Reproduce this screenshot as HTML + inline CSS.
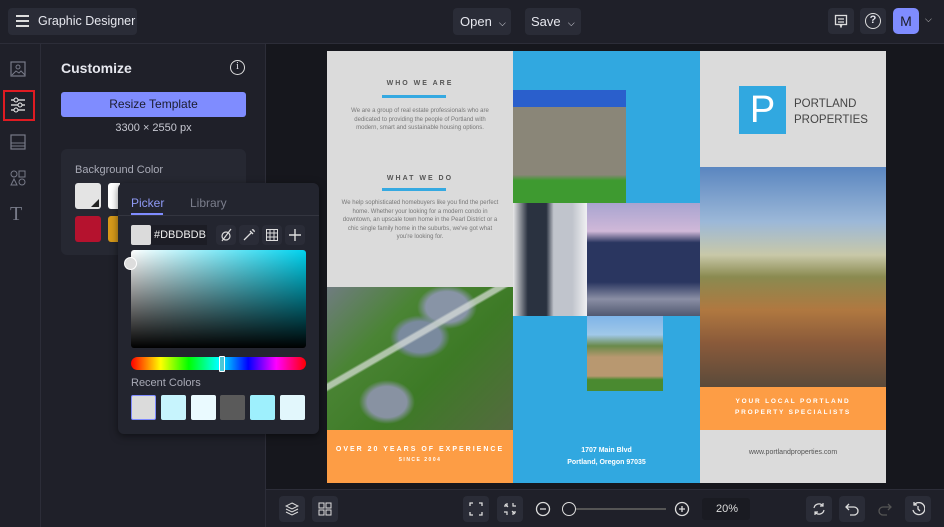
<!DOCTYPE html><html><head><style>
*{margin:0;padding:0;box-sizing:border-box}
body{width:944px;height:527px;overflow:hidden;background:#16171d;font-family:"Liberation Sans",sans-serif;color:#e6e7ee;position:relative}
.a{position:absolute}
.btn{background:#2a2c37;border-radius:4px}
.ct{text-align:center}
svg{display:block}
</style></head><body>
<!-- top bar -->
<div class="a" style="left:0;top:0;width:944px;height:44px;background:#1f2029;border-bottom:1px solid #2c2d38"></div>
<div class="a btn" style="left:8px;top:8px;width:129px;height:27px"></div>
<div class="a" style="left:16px;top:15px;width:13px;height:2px;background:#ddd;box-shadow:0 5px 0 #ddd,0 10px 0 #ddd"></div>
<div class="a" style="left:38px;top:14px;font-size:12.5px">Graphic Designer</div>
<div class="a btn" style="left:453px;top:8px;width:58px;height:27px"></div>
<div class="a" style="left:460px;top:14px;font-size:13px">Open &nbsp;<span style="font-size:9px">⌵</span></div>
<div class="a btn" style="left:525px;top:8px;width:56px;height:27px"></div>
<div class="a" style="left:531px;top:14px;font-size:13px">Save &nbsp;<span style="font-size:9px">⌵</span></div>
<div class="a btn" style="left:828px;top:8px;width:26px;height:26px"></div>
<svg class="a" style="left:834px;top:14px" width="14" height="14"><rect x="1.5" y="1.5" width="11" height="9" fill="none" stroke="#ddd" stroke-width="1.3"/><path d="M4 5h6M4 8h6M6 10.5l1 2.5l1-2.5" stroke="#ddd" stroke-width="1.2" fill="none"/></svg>
<div class="a btn" style="left:860px;top:8px;width:26px;height:26px"></div>
<div class="a ct" style="left:865px;top:13px;width:16px;height:16px;border:1.5px solid #ddd;border-radius:50%;font-size:11px;line-height:13px;font-weight:bold">?</div>
<div class="a ct" style="left:893px;top:8px;width:26px;height:26px;background:#7f8cff;border-radius:5px;color:#1b1c25;font-size:14px;line-height:26px">M</div>
<div class="a" style="left:925px;top:14px;font-size:9px;color:#ccc">⌵</div>
<!-- rail -->
<div class="a" style="left:0;top:44px;width:41px;height:483px;background:#1f2029;border-right:1px solid #2c2d38"></div>
<svg class="a" style="left:10px;top:61px" width="16" height="16"><rect x="1" y="1" width="14" height="14" fill="none" stroke="#777a88" stroke-width="1.2"/><circle cx="8" cy="6" r="2" fill="none" stroke="#777a88"/><path d="M2 14l4-4 3 2 2-2 4 4" stroke="#777a88" fill="none"/></svg>
<div class="a" style="left:3px;top:90px;width:32px;height:31px;border:2px solid #e01b22"></div>
<svg class="a" style="left:10px;top:97px" width="16" height="16"><path d="M1 3h14M1 8h14M1 13h14" stroke="#eee" stroke-width="1.3"/><circle cx="6" cy="3" r="2" fill="#1f2029" stroke="#eee"/><circle cx="10" cy="8" r="2" fill="#1f2029" stroke="#eee"/><circle cx="6" cy="13" r="2" fill="#1f2029" stroke="#eee"/></svg>
<svg class="a" style="left:10px;top:134px" width="16" height="16"><rect x="1" y="1" width="14" height="14" fill="none" stroke="#777a88" stroke-width="1.2"/><path d="M1 9h14M1 12h14" stroke="#777a88"/></svg>
<svg class="a" style="left:10px;top:170px" width="16" height="16"><circle cx="4" cy="4" r="3" fill="none" stroke="#777a88"/><rect x="9" y="1" width="6" height="6" fill="none" stroke="#777a88"/><path d="M4 9l3 6H1z" fill="none" stroke="#777a88"/><circle cx="12" cy="12" r="3" fill="none" stroke="#777a88"/></svg>
<div class="a" style="left:10px;top:203px;font-family:'Liberation Serif',serif;font-size:20px;color:#777a88">T</div>
<!-- panel -->
<div class="a" style="left:41px;top:44px;width:225px;height:483px;background:#1f2029;border-right:1px solid #2c2d38"></div>
<div class="a" style="left:61px;top:60px;font-size:14px;font-weight:bold">Customize</div>
<div class="a ct" style="left:230px;top:60px;width:15px;height:15px;border:1.3px solid #ddd;border-radius:50%;font-size:10px;line-height:12px;font-family:'Liberation Serif',serif">i</div>
<div class="a ct" style="left:61px;top:92px;width:185px;height:25px;background:#7f8cff;border-radius:3px;color:#1b1c30;font-size:12px;line-height:25px">Resize Template</div>
<div class="a ct" style="left:61px;top:122px;width:185px;font-size:11px;color:#c8c9d2">3300 × 2550 px</div>
<div class="a" style="left:61px;top:149px;width:185px;height:106px;background:#262832;border-radius:6px"></div>
<div class="a" style="left:75px;top:164px;font-size:11px;color:#a8aab6">Background Color</div>
<div class="a" style="left:75px;top:183px;width:26px;height:26px;background:#e4e4e4;border-radius:3px;overflow:hidden"><div class="a" style="right:2px;bottom:2px;width:0;height:0;border-left:8px solid transparent;border-bottom:8px solid #222"></div></div>
<div class="a" style="left:108px;top:183px;width:12px;height:26px;background:#fff;border-radius:3px 0 0 3px"></div>
<div class="a" style="left:75px;top:216px;width:26px;height:26px;background:#b5122e;border-radius:3px"></div>
<div class="a" style="left:108px;top:216px;width:12px;height:26px;background:#d79a1a;border-radius:3px 0 0 3px"></div>
<!-- picker -->
<div class="a" style="left:118px;top:183px;width:201px;height:251px;background:#23252f;border-radius:6px;box-shadow:0 2px 8px rgba(0,0,0,.5)"></div>
<div class="a" style="left:131px;top:196px;font-size:12px;color:#8f9af5">Picker</div>
<div class="a" style="left:131px;top:213px;width:32px;height:2px;background:#7f8cff"></div>
<div class="a" style="left:190px;top:196px;font-size:12px;color:#7b7e8c">Library</div>
<div class="a" style="left:118px;top:215px;width:201px;height:1px;background:#33353f"></div>
<div class="a" style="left:131px;top:225px;width:20px;height:20px;background:#dbdbdb;border-radius:2px"></div>
<div class="a" style="left:151px;top:225px;width:56px;height:20px;background:#1c1d25"></div>
<div class="a" style="left:154px;top:229px;font-size:11px;color:#eee">#DBDBDB</div>
<div class="a btn" style="left:216px;top:225px;width:20px;height:20px"></div>
<svg class="a" style="left:219px;top:228px" width="14" height="14"><circle cx="7" cy="8" r="4" fill="none" stroke="#ddd" stroke-width="1.2"/><path d="M3 13L12 1" stroke="#ddd" stroke-width="1.2"/></svg>
<div class="a btn" style="left:239px;top:225px;width:20px;height:20px"></div>
<svg class="a" style="left:242px;top:228px" width="14" height="14"><path d="M2 12l7-7M8 3l3 3M10 2a1.5 1.5 0 0 1 2 2" stroke="#ddd" stroke-width="1.3" fill="none"/></svg>
<div class="a btn" style="left:262px;top:225px;width:20px;height:20px"></div>
<svg class="a" style="left:265px;top:228px" width="14" height="14"><rect x="1.5" y="1.5" width="11" height="11" fill="none" stroke="#ddd"/><path d="M5 1.5v11M9 1.5v11M1.5 5h11M1.5 9h11" stroke="#ddd"/></svg>
<div class="a btn" style="left:285px;top:225px;width:20px;height:20px"></div>
<svg class="a" style="left:288px;top:228px" width="14" height="14"><path d="M7 1v12M1 7h12" stroke="#ddd" stroke-width="1.4"/></svg>
<div class="a" style="left:131px;top:250px;width:175px;height:98px;border-radius:3px;background:linear-gradient(to bottom,rgba(0,0,0,0),#000),linear-gradient(to right,#fff,#00d2ee)"></div>
<div class="a" style="left:124px;top:257px;width:13px;height:13px;border-radius:50%;background:#ddd;border:1px solid #fff"></div>
<div class="a" style="left:131px;top:357px;width:175px;height:13px;border-radius:7px;background:linear-gradient(to right,#f00,#ff0 17%,#0f0 33%,#0ff 50%,#00f 67%,#f0f 83%,#f00)"></div>
<div class="a" style="left:219px;top:356px;width:6px;height:16px;border:1px solid #fff;background:#4bc8d8;border-radius:1px"></div>
<div class="a" style="left:131px;top:377px;font-size:11px;color:#a8aab6">Recent Colors</div>
<div class="a" style="left:131px;top:395px;width:25px;height:25px;background:#dbdbdb;border:1px solid #7f8cff;border-radius:2px"></div>
<div class="a" style="left:161px;top:395px;width:25px;height:25px;background:#c7f4fd;border-radius:2px"></div>
<div class="a" style="left:191px;top:395px;width:25px;height:25px;background:#eafaff;border-radius:2px"></div>
<div class="a" style="left:220px;top:395px;width:25px;height:25px;background:#5a5a5a;border-radius:2px"></div>
<div class="a" style="left:250px;top:395px;width:25px;height:25px;background:#9ef0fd;border-radius:2px"></div>
<div class="a" style="left:280px;top:395px;width:25px;height:25px;background:#e2f7fc;border-radius:2px"></div>
<!-- canvas -->
<div class="a" style="left:327px;top:51px;width:559px;height:432px;background:#dbdbdb;overflow:hidden">
 <div class="a" style="left:0;top:0;width:186px;height:236px;background:#dbdbdb"></div>
 <div class="a ct" style="left:0;top:29px;width:186px;font-size:7px;letter-spacing:2px;color:#555;font-weight:bold">WHO WE ARE</div>
 <div class="a" style="left:55px;top:44px;width:64px;height:3px;background:#35a9e1"></div>
 <div class="a ct" style="left:20px;top:56px;width:146px;font-size:6px;line-height:8.5px;color:#777">We are a group of real estate professionals who are dedicated to providing the people of Portland with modern, smart and sustainable housing options.</div>
 <div class="a ct" style="left:0;top:124px;width:186px;font-size:7px;letter-spacing:2px;color:#555;font-weight:bold">WHAT WE DO</div>
 <div class="a" style="left:55px;top:137px;width:64px;height:3px;background:#35a9e1"></div>
 <div class="a ct" style="left:12px;top:148px;width:162px;font-size:6px;line-height:8.5px;color:#777">We help sophisticated homebuyers like you find the perfect home. Whether your looking for a modern condo in downtown, an upscale town home in the Pearl District or a chic single family home in the suburbs, we've got what you're looking for.</div>
 <div class="a" style="left:0;top:236px;width:186px;height:143px;background:linear-gradient(150deg,transparent 0 38%,rgba(220,225,220,.7) 39% 41%,transparent 42%),radial-gradient(ellipse 30px 22px at 50% 35%,#7a8a9e 70%,transparent 100%),radial-gradient(ellipse 30px 22px at 120px 20px,#8894a6 70%,transparent 100%),radial-gradient(ellipse 28px 22px at 60px 115px,#8892a2 70%,transparent 100%),linear-gradient(135deg,#707c80 0%,#4a8434 30%,#3d7a26 60%,#556a40 100%)"></div>
 <div class="a" style="left:0;top:379px;width:186px;height:53px;background:#fd9d45"></div>
 <div class="a ct" style="left:0;top:395px;width:186px;font-size:7px;letter-spacing:2px;color:#fff;font-weight:bold">OVER 20 YEARS OF EXPERIENCE</div>
 <div class="a ct" style="left:0;top:406px;width:186px;font-size:5px;letter-spacing:1.5px;color:#fff;font-weight:bold">SINCE 2004</div>
 <div class="a" style="left:186px;top:0;width:187px;height:432px;background:#31a8e0"></div>
 <div class="a" style="left:186px;top:39px;width:113px;height:113px;background:linear-gradient(to bottom,#2a5fcc 0 15%,#8a8678 15% 75%,#3e9a30 80%)"></div>
 <div class="a" style="left:186px;top:152px;width:74px;height:113px;background:linear-gradient(90deg,#e8e8ea 0%,#2a3240 20% 45%,#c0c4cc 55% 80%,#f0f0f2)"></div>
 <div class="a" style="left:260px;top:152px;width:113px;height:113px;background:linear-gradient(to bottom,#a8a4d0 0%,#d0b8d8 25%,#2a3660 35% 70%,#8a8ea4 85%,#505870)"></div>
 <div class="a" style="left:260px;top:265px;width:76px;height:75px;background:linear-gradient(to bottom,#7fb4e8 0%,#a0c8e8 25%,#6a8a4a 40%,#b89870 55% 80%,#4a8a30 85%)"></div>
 <div class="a ct" style="left:186px;top:394px;width:187px;font-size:7px;line-height:12px;color:#fff;font-weight:bold">1707 Main Blvd<br>Portland, Oregon 97035</div>
 <div class="a" style="left:373px;top:0;width:186px;height:116px;background:#dbdbdb"></div>
 <div class="a ct" style="left:412px;top:35px;width:47px;height:48px;background:#31a8e0;color:#fff;font-size:38px;line-height:48px">P</div>
 <div class="a" style="left:467px;top:45px;font-size:11.5px;line-height:16px;color:#444">PORTLAND<br>PROPERTIES</div>
 <div class="a" style="left:373px;top:116px;width:186px;height:220px;background:linear-gradient(to bottom,#5a86c0 0%,#9cb8d8 25%,#c8c8a8 40%,#8a8a50 50%,#b07840 65%,#8a5a3a 80%,#5a4a3a 100%)"></div>
 <div class="a" style="left:373px;top:336px;width:186px;height:43px;background:#fd9d45"></div>
 <div class="a ct" style="left:373px;top:345px;width:186px;font-size:6.5px;line-height:11px;letter-spacing:1.8px;color:#fff;font-weight:bold">YOUR LOCAL PORTLAND<br>PROPERTY SPECIALISTS</div>
 <div class="a ct" style="left:373px;top:398px;width:186px;font-size:7px;color:#555">www.portlandproperties.com</div>
</div>
<!-- bottom bar -->
<div class="a" style="left:266px;top:489px;width:678px;height:38px;background:#1f2029;border-top:1px solid #2c2d38"></div>
<div class="a btn" style="left:279px;top:496px;width:26px;height:26px"></div>
<svg class="a" style="left:285px;top:502px" width="14" height="14"><path d="M7 1l6 3-6 3-6-3z M1 7l6 3 6-3 M1 10l6 3 6-3" stroke="#ddd" fill="none"/></svg>
<div class="a btn" style="left:312px;top:496px;width:26px;height:26px"></div>
<svg class="a" style="left:318px;top:502px" width="14" height="14"><rect x="1" y="1" width="5" height="5" fill="none" stroke="#ddd"/><rect x="8" y="1" width="5" height="5" fill="none" stroke="#ddd"/><rect x="1" y="8" width="5" height="5" fill="none" stroke="#ddd"/><rect x="8" y="8" width="5" height="5" fill="none" stroke="#ddd"/></svg>
<div class="a btn" style="left:463px;top:496px;width:26px;height:26px"></div>
<svg class="a" style="left:469px;top:502px" width="14" height="14"><path d="M1 4V1h3M10 1h3v3M13 10v3h-3M4 13H1v-3" stroke="#ddd" fill="none" stroke-width="1.3"/></svg>
<div class="a btn" style="left:497px;top:496px;width:26px;height:26px"></div>
<svg class="a" style="left:503px;top:502px" width="14" height="14"><path d="M1 4h3V1M10 1v3h3M13 10h-3v3M4 13v-3H1M5 5L2 2M9 9l3 3" stroke="#ddd" fill="none" stroke-width="1.2"/></svg>
<svg class="a" style="left:535px;top:501px" width="16" height="16"><circle cx="8" cy="8" r="6.5" fill="none" stroke="#ddd" stroke-width="1.3"/><path d="M5 8h6" stroke="#ddd" stroke-width="1.3"/></svg>
<div class="a" style="left:570px;top:508px;width:96px;height:2px;background:#555"></div>
<div class="a" style="left:562px;top:502px;width:14px;height:14px;border-radius:50%;border:1.5px solid #ddd;background:#1f2029"></div>
<svg class="a" style="left:674px;top:501px" width="16" height="16"><circle cx="8" cy="8" r="6.5" fill="none" stroke="#ddd" stroke-width="1.3"/><path d="M5 8h6M8 5v6" stroke="#ddd" stroke-width="1.3"/></svg>
<div class="a" style="left:702px;top:498px;width:48px;height:22px;background:#1a1b22;border-radius:3px"></div>
<div class="a" style="left:716px;top:503px;font-size:11px;color:#ddd">20%</div>
<div class="a btn" style="left:806px;top:496px;width:26px;height:26px"></div>
<svg class="a" style="left:812px;top:502px" width="14" height="14"><path d="M2 6a5 5 0 0 1 9-2M12 8a5 5 0 0 1-9 2M11 1v3H8M3 13v-3h3" stroke="#ddd" fill="none" stroke-width="1.2"/></svg>
<div class="a btn" style="left:839px;top:496px;width:26px;height:26px"></div>
<svg class="a" style="left:845px;top:502px" width="14" height="14"><path d="M4 2L1 5l3 3M1 5h8a4 4 0 0 1 0 8H5" stroke="#ddd" fill="none" stroke-width="1.3"/></svg>
<svg class="a" style="left:878px;top:502px" width="14" height="14"><path d="M10 2l3 3-3 3M13 5H5a4 4 0 0 0 0 8h4" stroke="#555" fill="none" stroke-width="1.3"/></svg>
<div class="a btn" style="left:905px;top:496px;width:26px;height:26px"></div>
<svg class="a" style="left:911px;top:502px" width="14" height="14"><path d="M3 3a6 6 0 1 1-1 5M3 0v3h3M7 4v3l2 2" stroke="#ddd" fill="none" stroke-width="1.3"/></svg>
</body></html>
